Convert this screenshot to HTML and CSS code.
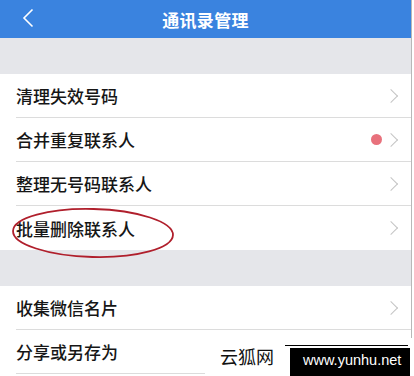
FILE: index.html
```
<!DOCTYPE html>
<html lang="zh-CN">
<head>
<meta charset="utf-8">
<title>通讯录管理</title>
<link rel="stylesheet" href="styles.css">
</head>
<body>
<div class="screen">
  <div class="app">
    <header class="topbar">
      <svg class="back" width="12" height="20" viewBox="0 0 12 20"><path d="M10.5 1.5 L2 10 L10.5 18.5" fill="none" stroke="#fff" stroke-width="1.6"/></svg>
      <h1 class="title">通讯录管理</h1>
    </header>
    <div class="band"></div>
    <ul class="list">
      <li class="row"><span class="label">清理失效号码</span><span class="chev"></span></li>
      <li class="row"><span class="label">合并重复联系人</span><span class="dot"></span><span class="chev"></span></li>
      <li class="row"><span class="label">整理无号码联系人</span><span class="chev"></span></li>
      <li class="row"><span class="label">批量删除联系人</span><span class="chev"></span></li>
    </ul>
    <div class="band"></div>
    <ul class="list">
      <li class="row"><span class="label">收集微信名片</span><span class="chev"></span></li>
      <li class="row"><span class="label">分享或另存为</span><span class="chev"></span></li>
    </ul>
  </div>
  <svg class="circle" width="170" height="56" viewBox="0 0 170 56"><ellipse cx="84" cy="27" rx="80" ry="24" fill="none" stroke="#b01f2c" stroke-width="1.8" transform="rotate(1.5 84 27)"/></svg>
  <div class="watermark">
    <span class="wm-cn">云狐网</span>
    <span class="wm-box">www.yunhu.net</span>
  </div>
</div>
</body>
</html>
```
FILE: styles.css
```
* { box-sizing: border-box; }
html, body { margin: 0; padding: 0; background: #fff; }
body { font-family: "Noto Sans CJK SC", "Noto Sans", sans-serif; }
.screen { position: relative; width: 414px; height: 376px; overflow: hidden; background: #fff; }
.app { width: 412px; height: 376px; border-right: 1px solid #b8b8b8; background: #fff; }
.topbar { height: 38px; background: #3a83df; display: flex; align-items: center; justify-content: center; position: relative; }
.back { position: absolute; left: 22px; top: 8px; }
.title { margin: 0; color: #fff; font-size: 17px; font-weight: 700; line-height: 1; letter-spacing: 0.3px; }
.band { height: 36px; background: #e5e6ea; }
.list { list-style: none; margin: 0; padding: 0 0 0 16px; background: #fff; }
.row { height: 44px; display: flex; align-items: center; border-bottom: 1px solid #dcdcdc; padding-right: 13px; }
.list .row:last-child { border-bottom: none; }
.list:last-child .row:last-child { border-bottom: 1px solid #dcdcdc; }
.label { flex: 1; font-size: 17px; color: #161616; line-height: 1; font-weight: 500; }
.chev { width: 10px; height: 10px; border-top: 1.4px solid #c4c4c4; border-right: 1.4px solid #c4c4c4; transform: rotate(45deg); margin-right: 2px; }
.dot { width: 11px; height: 11px; border-radius: 50%; background: #e8717c; margin-right: 4px; }
.circle { position: absolute; left: 9px; top: 206px; }
.watermark { position: absolute; left: 205px; top: 338px; right: 0; bottom: 0; background: #fff; }
.wm-cn { position: absolute; left: 15px; top: 9px; font-size: 18px; line-height: 1; color: #111; font-weight: 400; }
.wm-box { position: absolute; left: 85px; top: 10px; width: 120px; height: 28px; background: #000; color: #fff; font-family: "Liberation Sans", Arial, sans-serif; font-size: 14.5px; line-height: 24px; padding-left: 13px; }
.wm-box::before { content: ""; position: absolute; left: -5px; right: 2px; top: -3px; height: 1px; background: #000; }
```
